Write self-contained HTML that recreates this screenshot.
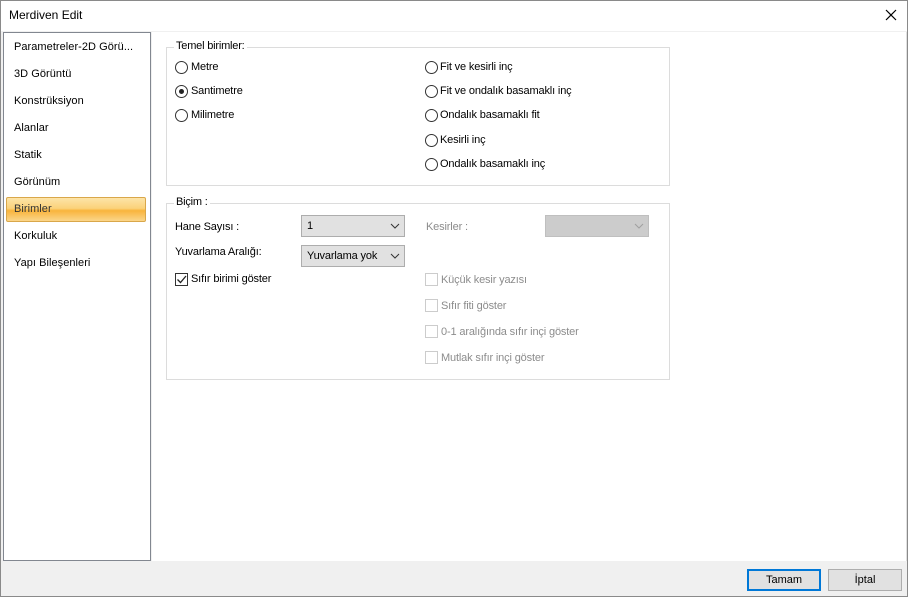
<!DOCTYPE html><html><head><style>
*{margin:0;padding:0;box-sizing:border-box}
body{width:908px;height:597px;position:relative;background:#f0f0f0;font-family:"Liberation Sans",sans-serif;font-size:11px;color:#000;overflow:hidden}
.a{position:absolute;white-space:nowrap}
.win{position:absolute;left:0;top:0;width:908px;height:597px;border:1px solid #8a8a8a}
.li{position:absolute;left:14px;font-size:11px;letter-spacing:0.05px}
.gb{position:absolute;border:1px solid #dcdcdc}
.gl{position:absolute;background:#fff;padding:0 2px;top:-8px;left:7px;letter-spacing:-0.2px}
.r{position:absolute;width:13px;height:13px;border:1px solid #333;border-radius:50%;background:#fff}
.r.on::after{content:"";position:absolute;left:3px;top:3px;width:5px;height:5px;border-radius:50%;background:#222}
.t{position:absolute;letter-spacing:-0.15px;line-height:13px;white-space:nowrap}
.cb{position:absolute;width:13px;height:13px;border:1px solid #333;background:#fff}
.cb.d{border-color:#cccccc}
.g{color:#8c8c8c}
.combo{position:absolute;border:1px solid #adadad;background:#e1e1e1;height:22px;padding:4px 5px;letter-spacing:-0.15px}
.combo svg{position:absolute;right:4px;top:7px}
.btn{position:absolute;top:569px;width:74px;height:22px;border:1px solid #adadad;background:#e1e1e1;text-align:center;line-height:20px;font-size:11px}
</style></head><body>
<div class="win"></div>
<div class="a" style="left:1px;top:1px;width:906px;height:30px;background:#fff"></div>
<div class="a" style="left:9px;top:8px;font-size:12px">Merdiven Edit</div>
<svg class="a" style="left:885px;top:9px" width="12" height="12"><path d="M1 1L11 11M11 1L1 11" stroke="#000" stroke-width="1.2"/></svg>
<div class="a" style="left:3px;top:32px;width:148px;height:529px;background:#fff;border:1px solid #828790"></div>
<div class="a" style="left:152px;top:32px;width:754px;height:529px;background:#fff"></div>
<div class="a" style="left:906px;top:32px;width:1px;height:529px;background:#e0e0e0"></div>
<div class="a" style="left:6px;top:197px;width:140px;height:25px;border:1px solid #d9a74a;border-radius:2px;background:linear-gradient(#fde4a8 0%,#fbd27a 45%,#f9b43c 55%,#fbd68a 100%)"></div>
<div class="li" style="top:41px">Parametreler-2D Görü...</div>
<div class="li" style="top:68px">3D Görüntü</div>
<div class="li" style="top:95px">Konstrüksiyon</div>
<div class="li" style="top:122px">Alanlar</div>
<div class="li" style="top:149px">Statik</div>
<div class="li" style="top:176px">Görünüm</div>
<div class="li" style="top:203px;color:#333">Birimler</div>
<div class="li" style="top:230px">Korkuluk</div>
<div class="li" style="top:257px">Yapı Bileşenleri</div>

<div class="gb" style="left:166px;top:47px;width:504px;height:139px"><span class="gl">Temel birimler:</span></div>
<div class="r" style="left:175px;top:61px"></div><div class="t" style="left:191px;top:61px">Metre</div>
<div class="r on" style="left:175px;top:85px"></div><div class="t" style="left:191px;top:85px">Santimetre</div>
<div class="r" style="left:175px;top:109px"></div><div class="t" style="left:191px;top:109px">Milimetre</div>
<div class="r" style="left:425px;top:61px"></div><div class="t" style="left:440px;top:61px">Fit ve kesirli inç</div>
<div class="r" style="left:425px;top:85px"></div><div class="t" style="left:440px;top:85px">Fit ve ondalık basamaklı inç</div>
<div class="r" style="left:425px;top:109px"></div><div class="t" style="left:440px;top:109px">Ondalık basamaklı fit</div>
<div class="r" style="left:425px;top:134px"></div><div class="t" style="left:440px;top:134px">Kesirli inç</div>
<div class="r" style="left:425px;top:158px"></div><div class="t" style="left:440px;top:158px">Ondalık basamaklı inç</div>

<div class="gb" style="left:166px;top:203px;width:504px;height:177px"><span class="gl">Biçim :</span></div>
<div class="t" style="left:175px;top:221px">Hane Sayısı :</div>
<div class="combo" style="left:301px;top:215px;width:104px">1<svg width="10" height="6"><path d="M1 1L5 5L9 1" stroke="#333" fill="none"/></svg></div>
<div class="t g" style="left:426px;top:221px">Kesirler :</div>
<div class="combo" style="left:545px;top:215px;width:104px;background:#cccccc;border-color:#bfbfbf"><svg width="10" height="6"><path d="M1 1L5 5L9 1" stroke="#a0a0a0" fill="none"/></svg></div>
<div class="t" style="left:175px;top:246px">Yuvarlama Aralığı:</div>
<div class="combo" style="left:301px;top:245px;width:104px">Yuvarlama yok<svg width="10" height="6"><path d="M1 1L5 5L9 1" stroke="#333" fill="none"/></svg></div>
<div class="cb" style="left:175px;top:273px"><svg width="11" height="11" style="position:absolute;left:0;top:0"><path d="M1.5 5.5L4.5 8.5L10 2" stroke="#222" stroke-width="1.3" fill="none"/></svg></div>
<div class="t" style="left:191px;top:273px">Sıfır birimi göster</div>
<div class="cb d" style="left:425px;top:273px"></div><div class="t g" style="left:441px;top:274px">Küçük kesir yazısı</div>
<div class="cb d" style="left:425px;top:299px"></div><div class="t g" style="left:441px;top:300px">Sıfır fiti göster</div>
<div class="cb d" style="left:425px;top:325px"></div><div class="t g" style="left:441px;top:326px">0-1 aralığında sıfır inçi göster</div>
<div class="cb d" style="left:425px;top:351px"></div><div class="t g" style="left:441px;top:352px">Mutlak sıfır inçi göster</div>

<div class="btn" style="left:747px;border:2px solid #0078d7;line-height:18px">Tamam</div>
<div class="btn" style="left:828px">İptal</div>
</body></html>
